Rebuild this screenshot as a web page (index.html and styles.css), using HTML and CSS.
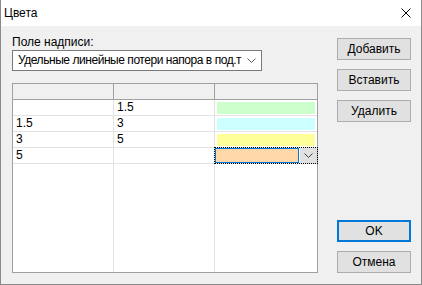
FILE: index.html
```html
<!DOCTYPE html>
<html lang="ru">
<head>
  <meta charset="UTF-8">
  <title>Цвета</title>
  <link rel="stylesheet" href="styles.css">
</head>
<body>

<div class="window">
  <div class="titlebar">
    <span class="title">Цвета</span>
    <svg class="close" width="10" height="10" viewBox="0 0 10 10">
      <path d="M0.5 0.5 L9.5 9.5 M9.5 0.5 L0.5 9.5" stroke="#000" stroke-width="1" fill="none"/>
    </svg>
  </div>

  <div class="content">
    <div class="main">
      <label class="caption">Поле надписи:</label>
      <div class="combo">
        <span class="combo-text">Удельные линейные потери напора в под.т</span>
        <svg class="chevron" width="9" height="5" viewBox="0 0 9 5">
          <polyline points="0.5,0.5 4.5,4.5 8.5,0.5" stroke="#606060" fill="none"/>
        </svg>
      </div>

      <div class="grid">
        <div class="row head">
          <div class="cell"></div>
          <div class="cell"></div>
          <div class="cell"></div>
        </div>
        <div class="row">
          <div class="cell"></div>
          <div class="cell">1.5</div>
          <div class="cell"><div class="swatch green"></div></div>
        </div>
        <div class="row">
          <div class="cell">1.5</div>
          <div class="cell">3</div>
          <div class="cell"><div class="swatch cyan"></div></div>
        </div>
        <div class="row">
          <div class="cell">3</div>
          <div class="cell">5</div>
          <div class="cell"><div class="swatch yellow"></div></div>
        </div>
        <div class="row">
          <div class="cell">5</div>
          <div class="cell"></div>
          <div class="cell editing">
            <div class="editor"></div>
            <div class="drop">
              <svg width="9" height="5" viewBox="0 0 9 5">
                <polyline points="0.5,0.5 4.5,4.5 8.5,0.5" stroke="#404040" fill="none"/>
              </svg>
            </div>
          </div>
        </div>
        <div class="row fill">
          <div class="cell"></div>
          <div class="cell"></div>
          <div class="cell"></div>
        </div>
      </div>
    </div>

    <div class="side">
      <button class="btn">Добавить</button>
      <button class="btn">Вставить</button>
      <button class="btn">Удалить</button>
      <div class="spacer"></div>
      <button class="btn default">OK</button>
      <button class="btn">Отмена</button>
    </div>
  </div>
</div>

</body>
</html>
```

FILE: styles.css
```css
body {
  margin: 0;
  font-family: 'Liberation Sans', Arial, sans-serif;
  font-size: 12px;
  color: #000;
  background: #fff;
}
.window {
  width: 422px;
  height: 285px;
  box-sizing: border-box;
  border: 1px solid #8a8a8a;
  border-top: none;
  background: #f0f0f0;
  display: flex;
  flex-direction: column;
}
.titlebar {
  height: 26px;
  flex: none;
  background: #fff;
  display: flex;
  align-items: center;
  padding: 0 10px 0 3px;
}
.title {
  flex: 1;
  line-height: 15px;
}
.content {
  flex: 1;
  display: flex;
  padding: 9px 10px 11px 11px;
}
.main {
  width: 306px;
  display: flex;
  flex-direction: column;
}
.caption {
  line-height: 15px;
  height: 15px;
}
.combo {
  width: 250px;
  height: 21px;
  box-sizing: border-box;
  border: 1px solid #7a7a7a;
  background: #fff;
  display: flex;
  align-items: center;
  padding: 0 5px 0 5px;
}
.combo-text {
  flex: 1;
  white-space: nowrap;
  line-height: 15px;
  letter-spacing: -0.45px;
}
.chevron {
  margin-left: 4px;
  flex: none;
}
.grid {
  margin-top: 12px;
  height: 190px;
  box-sizing: border-box;
  border: 1px solid #a0a0a0;
  background: #fff;
  display: flex;
  flex-direction: column;
}
.row {
  display: flex;
  height: 16px;
  flex: none;
  box-sizing: border-box;
  border-bottom: 1px solid #e3e3e3;
}
.row.head {
  background: #f0f0f0;
  border-bottom-color: #a0a0a0;
}
.row.fill {
  flex: 1;
  border-bottom: none;
}
.cell {
  width: 101px;
  box-sizing: border-box;
  border-right: 1px solid #e3e3e3;
  padding-left: 3px;
  line-height: 15px;
  white-space: nowrap;
}
.cell:last-child {
  width: 102px;
  border-right: none;
  padding-left: 0;
}
.head .cell {
  border-right-color: #a0a0a0;
}
.head .cell:last-child {
  border-right: none;
}
.swatch {
  height: 12px;
  margin: 2px 2px 1px 2px;
}
.green { background: #ccffcc; }
.cyan { background: #ccffff; }
.yellow { background: #ffff99; }
.cell.editing {
  display: flex;
  outline: 1px dotted #000;
}
.editor {
  width: 84px;
  height: 15px;
  box-sizing: border-box;
  border: 1px solid #0078d7;
  background: #ffd7a8;
}
.drop {
  width: 17px;
  height: 15px;
  margin-left: 1px;
  background: #e1e1e1;
  display: flex;
  align-items: center;
  justify-content: center;
}
.side {
  margin-left: auto;
  width: 74px;
  padding-top: 3px;
  display: flex;
  flex-direction: column;
}
.btn {
  height: 22px;
  margin: 0 0 9px 0;
  padding: 0;
  box-sizing: border-box;
  border: 1px solid #adadad;
  background: #e1e1e1;
  font-family: inherit;
  font-size: 12px;
  color: #000;
}
.btn:last-child {
  margin-bottom: 0;
}
.btn.default {
  border: 2px solid #0078d7;
}
.spacer {
  flex: 1;
}
```
